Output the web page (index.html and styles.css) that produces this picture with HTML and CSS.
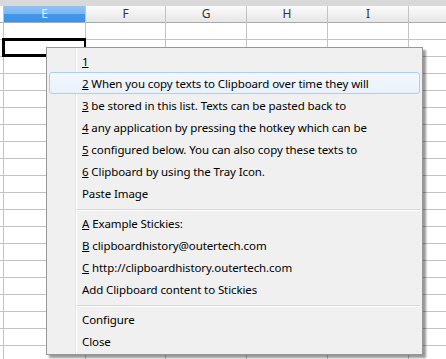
FILE: index.html
```html
<!DOCTYPE html>
<html lang="en">
<head>
    <meta charset="UTF-8">
    <title>Clipboard History Menu</title>
    <link rel="stylesheet" href="styles.css">
</head>
<body>
    <div class="topbar"></div>
    <div class="sheet">
        <div class="col col-rowhead">
            <div class="head"></div>
            <div class="cells"></div>
        </div>
        <div class="col col-e">
            <div class="head selected">E</div>
            <div class="cells"><div class="active-cell"></div></div>
        </div>
        <div class="col col-f">
            <div class="head">F</div>
            <div class="cells"></div>
        </div>
        <div class="col col-std">
            <div class="head">G</div>
            <div class="cells"></div>
        </div>
        <div class="col col-std">
            <div class="head">H</div>
            <div class="cells"></div>
        </div>
        <div class="col col-std">
            <div class="head">I</div>
            <div class="cells"></div>
        </div>
        <div class="col col-rest">
            <div class="head"></div>
            <div class="cells"></div>
        </div>
    </div>

    <div class="menu">
        <div class="item"><u>1</u></div>
        <div class="item hover"><u>2</u> When you copy texts to Clipboard over time they will</div>
        <div class="item"><u>3</u> be stored in this list. Texts can be pasted back to</div>
        <div class="item"><u>4</u> any application by pressing the hotkey which can be</div>
        <div class="item"><u>5</u> configured below. You can also copy these texts to</div>
        <div class="item"><u>6</u> Clipboard by using the Tray Icon.</div>
        <div class="item">Paste Image</div>
        <div class="sep"></div>
        <div class="item"><u>A</u> Example Stickies:</div>
        <div class="item"><u>B</u> clipboardhistory@outertech.com</div>
        <div class="item"><u>C</u> http://clipboardhistory.outertech.com</div>
        <div class="item">Add Clipboard content to Stickies</div>
        <div class="sep"></div>
        <div class="item">Configure</div>
        <div class="item">Close</div>
    </div>
</body>
</html>
```

FILE: styles.css
```css
body {
    margin: 0;
    width: 446px;
    height: 359px;
    overflow: hidden;
    background: #fff;
    font-family: 'Noto Sans', 'Open Sans', sans-serif;
    font-size: 12px;
    color: #000;
    position: relative;
}

.topbar {
    height: 6px;
    background: #d9d9d9;
}

.sheet {
    display: flex;
    height: 353px;
}

.col {
    display: flex;
    flex-direction: column;
    border-right: 1px solid #c3c3c3;
}

.col-rowhead { width: 3px; }
.col-e { width: 81px; }
.col-f { width: 79px; }
.col-std { width: 80px; }
.col-rest { flex: 1; border-right: none; }

.head {
    height: 16px;
    border-bottom: 1px solid #a9a9a9;
    background: linear-gradient(to bottom, #fbfbfb 0%, #f1f1f1 50%, #e6e6e6 100%);
    text-align: center;
    line-height: 16px;
    color: #333;
    font-size: 12px;
}

.col-rowhead .head {
    background: #fff;
}

.head.selected {
    background: linear-gradient(to bottom, #8dc3f7 0%, #7ab7f4 50%, #4397ea 52%, #3f91e6 100%);
    color: #dff3ff;
}

.cells {
    flex: 1;
    background: repeating-linear-gradient(to bottom, #fff 0, #fff 16px, #c3c3c3 16px, #c3c3c3 17px);
}

.active-cell {
    margin: 15px -2px 0 -2px;
    height: 19px;
    border: 3px solid #000;
    box-sizing: border-box;
    background: #fff;
}

.menu {
    position: absolute;
    left: 46px;
    top: 47px;
    width: 375px;
    height: 304px;
    padding: 2px 0 0;
    border: 1px solid #979797;
    background: #f0f0f0 linear-gradient(to right, transparent 28px, #e2e3e3 28px, #e2e3e3 29px, #fff 29px, #fff 30px, transparent 30px);
    box-shadow: 3px 3px 2px rgba(0, 0, 0, 0.4);
    font-size: 11.5px;
    letter-spacing: -0.1px;
}

.item {
    height: 22px;
    line-height: 22px;
    margin: 0 2px;
    padding-left: 32px;
    border: 1px solid transparent;
    border-radius: 3px;
    box-sizing: border-box;
    white-space: nowrap;
}

.item.hover {
    border-color: #b0cdf0;
    background: linear-gradient(to bottom, #f4f8fd 0%, #e8f1fc 100%);
}

.sep {
    height: 8px;
    margin-left: 30px;
    margin-right: 2px;
    box-sizing: border-box;
    padding-top: 5px;
}

.sep::after {
    content: "";
    display: block;
    border-top: 1px solid #d7d7d7;
    border-bottom: 1px solid #fff;
}
```
